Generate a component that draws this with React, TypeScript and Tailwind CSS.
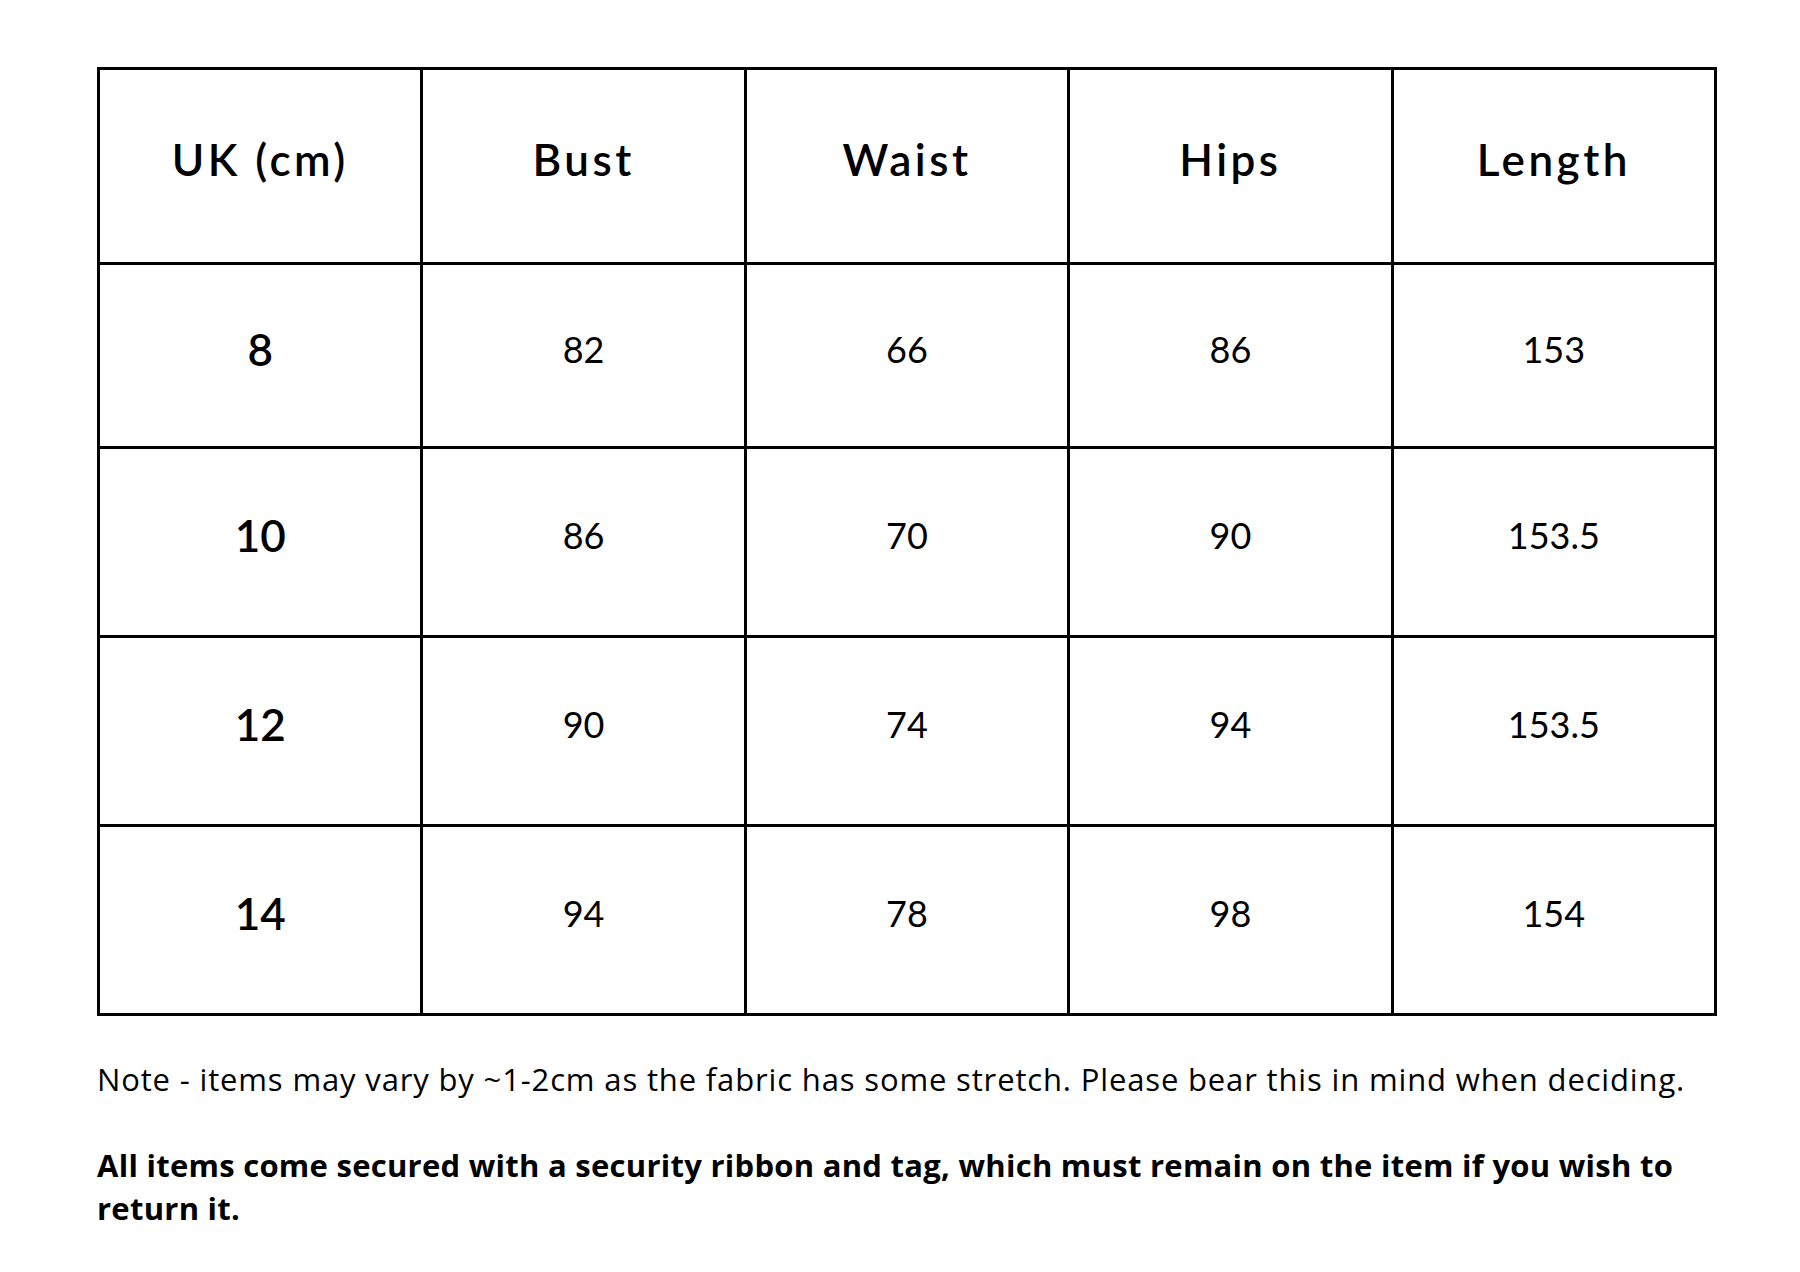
import React from "react";

const headers = ["UK (cm)", "Bust", "Waist", "Hips", "Length"];
const rows: string[][] = [
  ["8", "82", "66", "86", "153"],
  ["10", "86", "70", "90", "153.5"],
  ["12", "90", "74", "94", "153.5"],
  ["14", "94", "78", "98", "154"],
];

export default function App() {
  return (
    <div className="w-[1800px] h-[1272px] bg-white text-black pt-[67px] pl-[97px]">
      <div
        className="w-[1620px] grid grid-cols-5 grid-rows-[192px_181px_186px_186px_186px] gap-[3px] bg-black border-[3px] border-black"
        style={{ fontFamily: "Lato, 'Open Sans', sans-serif" }}
      >
        {headers.map((h) => (
          <div
            key={h}
            className="bg-white flex items-center justify-center pb-[14px] text-[44px] font-semibold tracking-[3.5px] leading-none"
          >
            {h}
          </div>
        ))}
        {rows.map((r, i) =>
          r.map((c, j) => (
            <div
              key={`${i}-${j}`}
              className={
                j === 0
                  ? "bg-white flex items-center justify-center pb-[14px] text-[44px] font-semibold leading-none"
                  : "bg-white flex items-center justify-center pb-[14px] text-[36px] font-normal leading-none"
              }
            >
              {c}
            </div>
          ))
        )}
      </div>
      <div style={{ fontFamily: "'Open Sans', 'Noto Sans', sans-serif" }} className="text-[31px]">
        <p className="mt-[43px] leading-[41px] whitespace-nowrap tracking-[0.85px]">
          Note - items may vary by ~1-2cm as the fabric has some stretch. Please bear this in mind when deciding.
        </p>
        <p className="mt-[44px] leading-[43px] font-bold whitespace-nowrap tracking-[0.27px]">
          All items come secured with a security ribbon and tag, which must remain on the item if you wish to
          <br />
          return it.
        </p>
      </div>
    </div>
  );
}
